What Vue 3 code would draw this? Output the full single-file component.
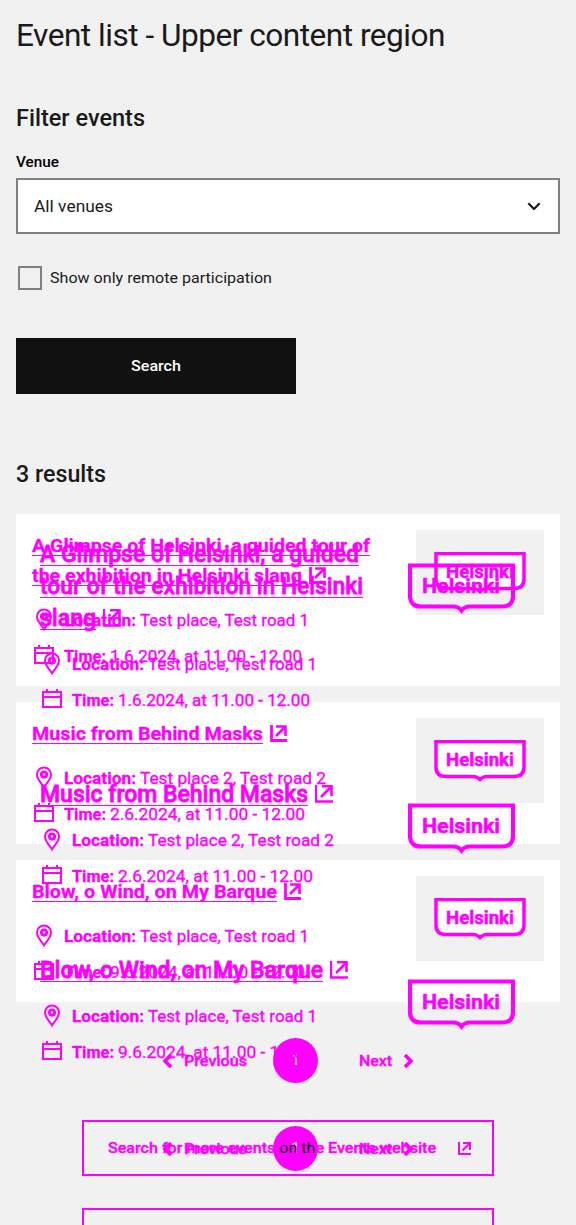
<script setup>
import { h } from 'vue'

// Stretches a line of text horizontally so that it takes the given width.
const vFit = {
  mounted(el, { value }) {
    const natural = el.getBoundingClientRect().width
    el.style.transform = `scaleX(${value / natural})`
    el.style.marginRight = `${value - natural}px`
  },
}

const icon = (size, box, ...paths) => () =>
  h('svg', { width: size, height: size, viewBox: box, fill: 'none', stroke: 'currentColor', 'stroke-width': 2 },
    paths.map((p) => h('path', typeof p === 'string' ? { d: p } : p)))

const PinIcon = icon(24, '0 0 24 24',
  'M12 21.3C10 17.5 5 14 5 8.5a7 7 0 0 1 14 0C19 14 14 17.5 12 21.3z',
  { d: 'M12 5.8a2.7 2.7 0 1 1 0 5.4a2.700 2.700 0 1 1 0-5.400z', 'stroke-width': 2.8 })
const CalendarIcon = icon(24, '0 0 24 24', 'M3 4H21V19H3zM3 9H21M7 1V4M17 1V4')
const ExternalIcon = icon(18, '0 0 18 18',
  { d: 'M1.5 0V15.5H17', 'stroke-width': 2.8 },
  { d: 'M6 1.5H15.5V11M15 2L6 11', 'stroke-width': 2.6 })
const LargeExternalIcon = icon(18, '0 0 18 18',
  { d: 'M1 0V16.5H18', 'stroke-width': 2.4 },
  { d: 'M7 1.3H16.500V11M16 2L6 12', 'stroke-width': 2.6 })
const SmallExternalIcon = icon(13, '0 0 13 13', 'M1 0V12H13M5 1H12V8M12 1L4.5 8.5')
const PrevIcon = icon(24, '0 0 24 24', { d: 'M15 6L9 12L15 18', 'stroke-width': 3.6 })
const NextIcon = icon(24, '0 0 24 24', { d: 'M9 6L15 12L9 18', 'stroke-width': 3.6 })

const events = [
  {
    lines: [['A Glimpse of Helsinki, a guided tour of', 338], ['the exhibition in Helsinki slang', 270]],
    large: [['A Glimpse of Helsinki, a guided', 319], ['tour of the exhibition in Helsinki', 323], ['slang', 56]],
    place: ['Test place, Test road 1', 169],
    time: ['1.6.2024, at 11.00 - 12.00', 192],
  },
  {
    lines: [['Music from Behind Masks', 231]],
    large: [['Music from Behind Masks', 268]],
    place: ['Test place 2, Test road 2', 186],
    time: ['2.6.2024, at 11.00 - 12.00', 195],
  },
  {
    lines: [['Blow, o Wind, on My Barque', 245]],
    large: [['Blow, o Wind, on My Barque', 283]],
    place: ['Test place, Test road 1', 169],
    time: ['9.6.2024, at 11.00 - 12.00', 195],
  },
]
</script>

<template>
  <main class="page">
    <h1><span v-fit="429" class="t">Event list - Upper content region</span></h1>
    <form @submit.prevent>
      <h2><span v-fit="129" class="t">Filter events</span></h2>
      <label class="label"><span v-fit="43" class="t">Venue</span></label>
      <div class="select">
        <span v-fit="79" class="t">All venues</span>
        <svg width="24" height="24" viewBox="0 0 24 24" fill="none" stroke="#1a1a1a" stroke-width="2.2"><path d="M6.3 9.3L12 15L17.7 9.3" /></svg>
      </div>
      <div class="remote"><i class="box"></i><span v-fit="222" class="t">Show only remote participation</span></div>
      <button class="submit"><span v-fit="50" class="t">Search</span></button>
    </form>
    <h2 class="count"><span v-fit="90" class="t">3 results</span></h2>

    <section class="stage">
      <div class="list">
        <article v-for="e in events" :key="e.time[0]" class="card">
          <div class="body">
            <h3>
              <div v-for="(l, i) in e.lines" :key="i" class="line">
                <span v-fit="l[1]" class="t u">{{ l[0] }}</span>
                <ExternalIcon v-if="i === e.lines.length - 1" />
              </div>
            </h3>
            <div class="row"><PinIcon /><b v-fit="72" class="t">Location:</b><span v-fit="e.place[1]" class="t">{{ e.place[0] }}</span></div>
            <div class="row"><CalendarIcon /><b v-fit="42" class="t">Time:</b><span v-fit="e.time[1]" class="t">{{ e.time[0] }}</span></div>
          </div>
          <div class="thumb">
            <svg width="92" height="43" viewBox="0 0 92 43">
              <path d="M2 1.5H90V27c0 6-3.5 9.5-10 9.5H53c-4 0-5.5 1.5-7 3-1.5-1.5-3-3-7-3H12c-6.500 0-10-3.500-10-9.500z" class="shield" />
              <text x="12" y="26" class="logo" font-size="18" textLength="68" lengthAdjust="spacingAndGlyphs">Helsinki</text>
            </svg>
          </div>
        </article>
      </div>
      <nav class="pages">
        <PrevIcon /><span v-fit="63" class="t">Previous</span><em>1</em><span v-fit="33" class="t">Next</span><NextIcon />
      </nav>
      <a class="more front">
        <span v-fit="328" class="t">Search for more events <i class="dark">on th</i>e Events website</span>
        <SmallExternalIcon />
      </a>

      <div class="overlay">
        <article v-for="e in events" :key="e.time[0]" class="large">
          <div class="body">
            <h3>
              <div v-for="(l, i) in e.large" :key="i" class="line">
                <span v-fit="l[1]" class="t u">{{ l[0] }}</span>
                <LargeExternalIcon v-if="i === e.large.length - 1" />
              </div>
            </h3>
            <div class="row"><PinIcon /><b v-fit="72" class="t">Location:</b><span v-fit="e.place[1]" class="t">{{ e.place[0] }}</span></div>
            <div class="row"><CalendarIcon /><b v-fit="42" class="t">Time:</b><span v-fit="e.time[1]" class="t">{{ e.time[0] }}</span></div>
          </div>
          <svg class="crest" width="107" height="51" viewBox="0 0 107 51">
            <path d="M2 2.500H105V33c0 7-4 10.500-11 10.500H62c-5 0-7 2-8.500 4-1.500-2-3.500-4-8.500-4H13C6 43.500 2 40 2 33z" class="shield wide" />
            <text x="14" y="30" class="logo" font-size="21" textLength="78" lengthAdjust="spacingAndGlyphs">Helsinki</text>
          </svg>
        </article>
        <nav class="pages">
          <PrevIcon /><span v-fit="63" class="t">Previous</span><em>1</em><span v-fit="33" class="t">Next</span><NextIcon />
        </nav>
        <a class="more"></a>
      </div>
    </section>
  </main>
</template>

<style>
html, body { background: #f1f1f1; }
</style>
<style scoped>
.page { box-sizing: border-box; width: 576px; height: 1225px; overflow: hidden; background: #f1f1f1; color: #1a1a1a; font-family: Roboto, "Liberation Sans", sans-serif; }
.t { display: inline-block; white-space: nowrap; transform-origin: 0 50%; flex: none; }
svg { display: block; flex: none; }
h1, h2, h3 { margin: 0; font-weight: 500; }
h1 { height: 100px; padding: 11px 16px 0; box-sizing: border-box; font-size: 32px; line-height: 48px; font-weight: 400; letter-spacing: -.5px; }
form { padding: 0 16px; }
h2 { font-size: 24px; line-height: 36px; height: 52px; }
.label { display: block; height: 26px; font-size: 15px; line-height: 20px; font-weight: 500; color: #000; }
.select { display: flex; align-items: center; justify-content: space-between; box-sizing: border-box; height: 56px; padding: 0 12px 0 16px; border: 2px solid #808080; background: #fff; font-size: 17px; }
.remote { display: flex; align-items: center; gap: 8px; margin-top: 32px; padding-left: 2px; height: 24px; font-size: 15.500px; }
.box { box-sizing: border-box; width: 24px; height: 24px; border: 2px solid #808080; }
.submit { display: flex; align-items: center; justify-content: center; width: 280px; height: 56px; margin-top: 48px; border: 0; padding: 0; background: #111; color: #fff; font: 500 15.500px Roboto, sans-serif; }
.count { height: 120px; padding: 62px 16px 0; box-sizing: border-box; }

.stage { position: relative; color: #f0f; }
.list { display: flex; flex-direction: column; gap: 16px; padding: 0 16px; }
.card { display: flex; justify-content: space-between; padding: 16px 16px 12px; background: #fff; }
.card h3 { padding: 1px 0 11px; font-size: 18.500px; font-weight: 700; -webkit-text-stroke: .3px #f0f; }
.card .line { height: 30px; line-height: 30px; gap: 7px; }
.line { display: flex; align-items: center; }
.u { text-decoration: underline; text-decoration-thickness: 1px; text-underline-offset: 3px; text-decoration-skip-ink: none; }
.row { display: flex; align-items: center; height: 36px; gap: 4px; font-size: 17px; line-height: 36px; -webkit-text-stroke: .35px #f0f; }
.row svg { margin-right: 4px; }
.row b { font-weight: 700; }
.thumb { width: 128px; height: 85px; background: #f1f1f1; }
.thumb svg { margin: 22px 0 0 18px; }
.shield { fill: #fff; stroke: #f0f; stroke-width: 3.500; }
.shield.wide { fill: none; stroke-width: 4.200; }
.logo { fill: #f0f; stroke: #f0f; stroke-width: .5; font-weight: 700; }

.pages { display: flex; align-items: center; height: 45px; margin-top: 36px; padding-left: 156px; gap: 4px; font-size: 15px; font-weight: 500; -webkit-text-stroke: .4px #f0f; }
.pages em { width: 45px; height: 45px; margin: 0 37px 0 22px; border-radius: 50%; background: #f0f; color: #f1f1f1; line-height: 45px; text-align: center; font-style: normal; font-weight: 400; -webkit-text-stroke: 0; }
.more { display: flex; align-items: center; justify-content: space-between; box-sizing: border-box; height: 56px; margin: 37px 82px 0; padding: 0 21px 0 24px; border: 2px solid #f0f; font-size: 15px; font-weight: 500; -webkit-text-stroke: .4px; }
.front { position: relative; z-index: 2; }
.dark { font-style: normal; font-weight: 400; color: #111; -webkit-text-stroke: 0; }

.overlay { position: absolute; inset: 0 0 auto; z-index: 1; padding-top: 24px; }
.large { display: flex; padding-left: 40px; }
.large + .large { margin-top: 60px; }
.large .body { width: 368px; }
.large h3 { padding-bottom: 12px; font-size: 24px; -webkit-text-stroke: .8px #f0f; }
.large .line { height: 32px; line-height: 32px; gap: 7px; }
.crest { margin-top: 25px; }
.overlay .pages { margin-top: 56px; }
</style>
